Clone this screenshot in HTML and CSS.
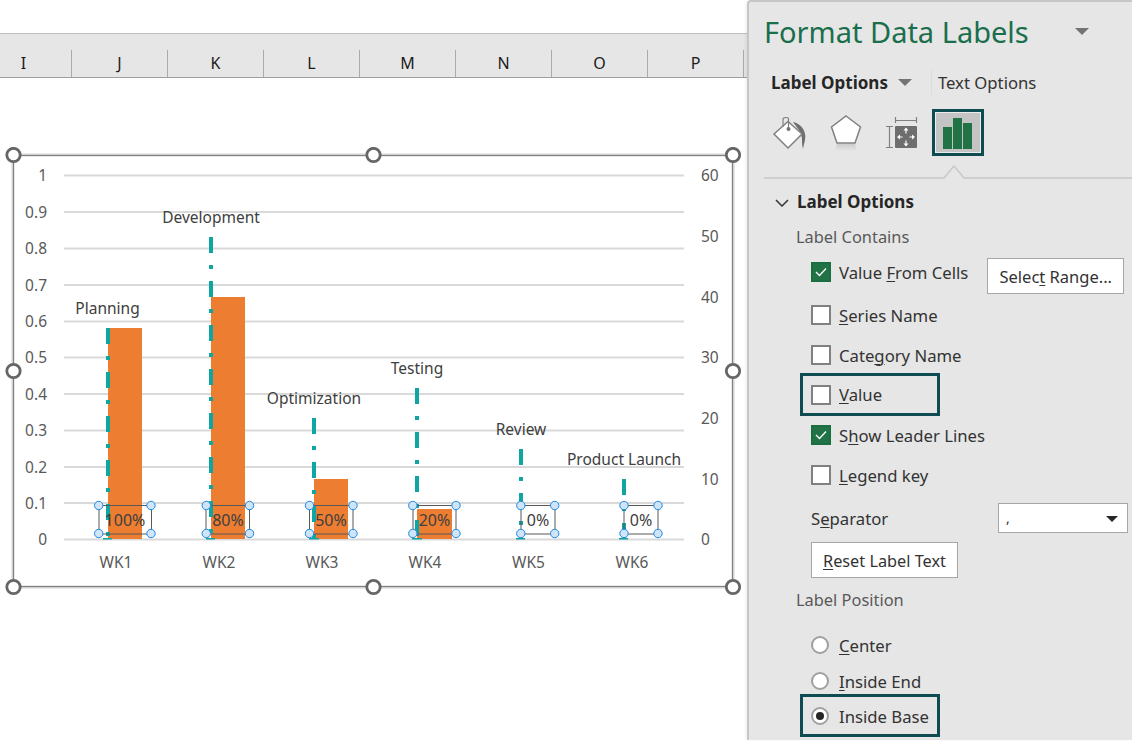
FILE: index.html
```html
<!DOCTYPE html>
<html lang="en">
<head>
<meta charset="utf-8">
<title>Format Data Labels</title>
<link rel="stylesheet" href="styles.css">
</head>
<body>
<div class="page">
  <main class="sheet">
    <div class="columns">
      <div class="col first">I</div><div class="col">J</div><div class="col">K</div><div class="col">L</div><div class="col">M</div><div class="col">N</div><div class="col">O</div><div class="col">P</div>
    </div>
    <svg class="chart" viewBox="0 147 748 450" width="748" height="450">
      <rect class="frame" x="13" y="155" width="720" height="432"/>
      <rect class="frame-in" x="13.500" y="155.500" width="719" height="431"/>
      <g class="grid">
        <line x1="64" x2="684" y1="175.5" y2="175.5"/><line x1="64" x2="684" y1="212" y2="212"/><line x1="64" x2="684" y1="248.5" y2="248.5"/><line x1="64" x2="684" y1="285" y2="285"/><line x1="64" x2="684" y1="321.5" y2="321.5"/><line x1="64" x2="684" y1="357.5" y2="357.5"/><line x1="64" x2="684" y1="394" y2="394"/><line x1="64" x2="684" y1="430.5" y2="430.5"/><line x1="64" x2="684" y1="467" y2="467"/><line x1="64" x2="684" y1="503" y2="503"/><line x1="64" x2="684" y1="539.5" y2="539.5"/>
      </g>
      <g class="axis end">
        <text x="47" y="180.5">1</text><text x="47" y="218">0.9</text><text x="47" y="254">0.8</text><text x="47" y="291">0.7</text><text x="47" y="327">0.6</text><text x="47" y="363">0.5</text><text x="47" y="400">0.4</text><text x="47" y="436">0.3</text><text x="47" y="473">0.2</text><text x="47" y="509">0.1</text><text x="47" y="544.5">0</text>
      </g>
      <g class="axis">
        <text x="701" y="180.5">60</text><text x="701" y="242">50</text><text x="701" y="303">40</text><text x="701" y="363">30</text><text x="701" y="424">20</text><text x="701" y="485">10</text><text x="701" y="544.5">0</text>
      </g>
      <g class="bars">
        <rect x="108" y="328" width="34" height="211"/><rect x="211" y="297" width="34" height="242"/><rect x="314" y="479" width="34" height="60"/><rect x="417" y="509" width="35" height="30"/>
      </g>
      <g class="leader">
        <line x1="108" x2="108" y1="328" y2="539"/><line x1="211" x2="211" y1="237" y2="539"/><line x1="314" x2="314" y1="418" y2="539"/><line x1="417" x2="417" y1="388" y2="539"/><line x1="521" x2="521" y1="449" y2="539"/><line x1="624" x2="624" y1="479" y2="539"/>
      </g>
      <g class="ticks">
        <rect x="103" y="538" width="9" height="1.5"/><rect x="206" y="538" width="9" height="1.5"/><rect x="309" y="538" width="10" height="1.5"/><rect x="412" y="538" width="10" height="1.5"/><rect x="516" y="538" width="9" height="1.5"/><rect x="619" y="538" width="9" height="1.5"/>
      </g>
      <g class="names">
        <text x="107.5" y="314">Planning</text><text x="211" y="222.5">Development</text><text x="314" y="403.5">Optimization</text><text x="417" y="374">Testing</text><text x="521" y="434.5">Review</text><text x="624" y="464.500">Product Launch</text>
      </g>
      <g class="cats">
        <text x="116" y="567.5">WK1</text><text x="219" y="567.5">WK2</text><text x="322" y="567.5">WK3</text><text x="425" y="567.5">WK4</text><text x="528.5" y="567.5">WK5</text><text x="632" y="567.5">WK6</text>
      </g>
      <g class="lblbox">
        <rect x="99" y="505.5" width="52.5" height="28.5"/><rect x="206" y="505.5" width="43.5" height="28.5"/><rect x="309.5" y="505.5" width="43.5" height="28.5"/><rect x="413" y="505.5" width="43" height="28.5"/><rect x="521" y="505.5" width="34" height="28.5"/><rect x="624" y="505.5" width="34" height="28.5"/>
      </g>
      <g class="pct">
        <text x="125" y="526">100%</text><text x="228" y="526">80%</text><text x="331" y="526">50%</text><text x="434.5" y="526">20%</text><text x="538" y="526">0%</text><text x="641" y="526">0%</text>
      </g>
      <g class="dot">
        <circle cx="98.7" cy="505.5" r="4.2"/><circle cx="151" cy="505.5" r="4.2"/><circle cx="98.7" cy="533.5" r="4.2"/><circle cx="151" cy="533.5" r="4.2"/>
        <circle cx="206.3" cy="505.5" r="4.2"/><circle cx="249.5" cy="505.5" r="4.2"/><circle cx="206.3" cy="533.5" r="4.2"/><circle cx="249.5" cy="533.5" r="4.2"/>
        <circle cx="309.5" cy="505.5" r="4.2"/><circle cx="353" cy="505.5" r="4.2"/><circle cx="309.5" cy="533.5" r="4.2"/><circle cx="353" cy="533.5" r="4.2"/>
        <circle cx="412.8" cy="505.5" r="4.2"/><circle cx="456" cy="505.5" r="4.2"/><circle cx="412.8" cy="533.5" r="4.2"/><circle cx="456" cy="533.5" r="4.2"/>
        <circle cx="520.8" cy="505.5" r="4.2"/><circle cx="554.7" cy="505.5" r="4.2"/><circle cx="520.8" cy="533.5" r="4.2"/><circle cx="554.7" cy="533.5" r="4.2"/>
        <circle cx="624" cy="505.5" r="4.2"/><circle cx="658" cy="505.5" r="4.2"/><circle cx="624" cy="533.5" r="4.2"/><circle cx="658" cy="533.5" r="4.2"/>
      </g>
      <g class="handle">
        <circle cx="13.5" cy="155" r="6.7"/><circle cx="373.5" cy="155" r="6.7"/><circle cx="733" cy="155" r="6.7"/><circle cx="13.5" cy="371" r="6.7"/><circle cx="733" cy="371" r="6.7"/><circle cx="13.5" cy="587" r="6.7"/><circle cx="373.5" cy="587" r="6.7"/><circle cx="733" cy="587" r="6.7"/>
      </g>
    </svg>
  </main>
  <aside class="panel">
    <div class="title-row"><h1 class="title">Format Data Labels</h1><span class="tri tri-title"></span></div>
    <div class="tabs"><b class="tab-on">Label Options</b><span class="tri tri-tab"></span><span class="tab-sep"></span><span class="tab-off">Text Options</span></div>
    <div class="icons">
      <svg class="ico ico-a" viewBox="772 109 48 46" width="48" height="46">
        <path class="paint" d="M793 122c6 1 11 6 12 12 1 4-1 10-2 15-1-4-1-7-1-10l-1-6z"/>
        <path class="ico-line" d="M788 121.500l14 12.500-14 14-14-14z"/>
        <path class="ico-thin" d="M783 127v-7a2.500 2.500 0 0 1 2.500-2.500h1A2 2 0 0 1 788.500 120v9"/>
        <circle class="ico-dot" cx="788.500" cy="129" r="2"/>
      </svg>
      <svg class="ico ico-b" viewBox="820 109 56 46" width="56" height="46">
        <defs><linearGradient id="fade" x1="0" y1="0" x2="0" y2="1"><stop offset="0" stop-color="#cccccc"/><stop offset="1" stop-color="#e6e6e6"/></linearGradient></defs>
        <path class="ico-line" d="M846 116l14.500 11-5.500 16h-18l-5.500-16z"/>
        <path fill="url(#fade)" d="M837 144h18l2 7h-22z"/>
      </svg>
      <svg class="ico ico-c" viewBox="876 109 56 46" width="56" height="46">
        <path class="ico-thin" d="M895.500 117v6M916.500 117v6M895.500 120.500h21M886 126.500h7M886 147.500h7M889.500 126.500v21"/>
        <rect class="ico-sq" x="895" y="126" width="22" height="22" rx="1"/>
        <path class="ico-arrows" d="M906 129.500v4M906 140.500v4M898.500 137h4M909.500 137h4"/>
        <path class="ico-heads" d="M906 127.500l2.500 3h-5zM906 146.500l-2.500-3h5zM897 137l3-2.500v5zM915 137l-3-2.500v5z"/>
      </svg>
      <div class="ico-on">
        <svg viewBox="0 0 29 31" width="29" height="31"><path class="ico-bars" d="M0 9h9v22H0zM10 0h9v31H10zM20 5h9v26h-9z"/></svg>
      </div>
    </div>
    <svg class="divider" viewBox="0 0 381 16" width="381" height="16"><path d="M13 14h180l10-12 10 12h168"/></svg>
    <div class="section"><svg class="caret" viewBox="0 0 14 8" width="14" height="8"><path d="M1 1l6 6 6-6"/></svg><b>Label Options</b></div>
    <div class="group">Label Contains</div>
    <div class="row row-first"><span class="cb on"><svg viewBox="0 0 12 10" width="12" height="10"><path d="M1 5l3.500 3.500L11 1.500"/></svg></span><span class="lab">Value <u>F</u>rom Cells</span><button class="btn btn-range">Selec<u>t</u> Range...</button></div>
    <div class="row"><span class="cb"></span><span class="lab"><u>S</u>eries Name</span></div>
    <div class="row"><span class="cb"></span><span class="lab">Cate<u>g</u>ory Name</span></div>
    <div class="row hl"><span class="cb"></span><span class="lab"><u>V</u>alue</span></div>
    <div class="row"><span class="cb on"><svg viewBox="0 0 12 10" width="12" height="10"><path d="M1 5l3.500 3.500L11 1.500"/></svg></span><span class="lab">S<u>h</u>ow Leader Lines</span></div>
    <div class="row"><span class="cb"></span><span class="lab"><u>L</u>egend key</span></div>
    <div class="row row-sep"><span class="sep-lab">S<u>e</u>parator</span><span class="select"><span class="comma">,</span><span class="tri tri-sel"></span></span></div>
    <button class="btn btn-reset"><u>R</u>eset Label Text</button>
    <div class="group group-pos">Label Position</div>
    <div class="row row-radio first-radio"><span class="rd"></span><span class="lab"><u>C</u>enter</span></div>
    <div class="row row-radio"><span class="rd"></span><span class="lab"><u>I</u>nside End</span></div>
    <div class="row hl hl-radio"><span class="rd on"></span><span class="lab lab-base">Inside Base</span></div>
  </aside>
</div>
</body>
</html>
```
FILE: styles.css
```css
* { box-sizing: border-box; }
html, body { margin: 0; padding: 0; background: #fff; }
body { font-family: "Noto Sans", "Open Sans", "Liberation Sans", sans-serif; color: #262626; }
.page { display: flex; width: 1132px; height: 741px; overflow: hidden; }
.sheet { width: 747px; flex: none; padding-top: 33px; overflow: hidden; background: #fff; }

.columns { display: flex; height: 45px; padding-top: 16px; background: #e6e6e6; border-top: 1px solid #c0c0c0; border-bottom: 1px solid #9f9f9f; overflow: hidden; }
.col { flex: none; width: 96px; height: 27px; border-right: 1px solid #ababab; text-align: center; font-size: 16px; line-height: 27px; color: #1a1a1a; }
.col.first { margin-left: -24px; }

.chart { display: block; margin-top: 69px; }
.frame { fill: #fff; stroke: #d2d2d2; stroke-width: 3; }
.frame-in { fill: none; stroke: #808080; stroke-width: 1; }
.grid line { stroke: #d9d9d9; stroke-width: 2; }
.chart text { font-family: "Noto Sans", "Open Sans", sans-serif; font-size: 15.500px; }
.axis text { fill: #595959; }
.axis.end text { text-anchor: end; }
.bars rect { fill: #ed7d31; }
.leader line { stroke: #0ea5a3; stroke-width: 4; stroke-dasharray: 16 12 4 12; }
.ticks rect { fill: #0ea5a3; }
.names text { fill: #404040; text-anchor: middle; }
.cats text { fill: #595959; text-anchor: middle; }
.chart .pct text { fill: #404040; text-anchor: middle; font-size: 16px; }
.lblbox rect { fill: none; stroke: #595959; stroke-width: 1; }
.dot circle { fill: #cfe4f6; stroke: #1e88e5; stroke-width: 1; }
.handle circle { fill: #fff; stroke: #666; stroke-width: 2.800; }

.panel { width: 385px; height: 740px; flex: none; padding-left: 2px; background: #e6e6e6; border-left: 2px solid #c6c6c6; border-top: 2px solid #c6c6c6; border-top-left-radius: 4px; box-shadow: -2px 0 3px rgba(0, 0, 0, .05); overflow: hidden; }
.title-row { display: flex; align-items: center; height: 62px; padding: 0 0 2px 13px; }
.title { margin: 0; font-size: 29px; font-weight: 400; color: #1a6e4c; line-height: 60px; }
.tri { display: block; width: 0; height: 0; border-left: 7px solid transparent; border-right: 7px solid transparent; border-top: 7px solid #737373; }
.tri-title { margin-left: 46px; margin-top: -1px; }
.tabs { display: flex; align-items: center; height: 38px; padding: 0 0 2px 20px; font-size: 16.700px; }
.tab-on { font-size: 17px; font-weight: 700; }
.tri-tab { margin-left: 10px; }
.tab-sep { width: 1px; height: 26px; margin: 0 6px 0 19px; background: #dcdcdc; }
.tab-off { color: #333; }
.icons { display: flex; height: 47px; margin-top: 7px; padding-left: 21px; }
.ico { display: block; flex: none; }
.paint { fill: #6e6e6e; }
.ico-line { fill: #fff; stroke: #808080; stroke-width: 1.500; }
.ico-thin { fill: none; stroke: #808080; stroke-width: 1.200; }
.ico-dot { fill: #737373; }
.ico-sq { fill: #6e6e6e; }
.ico-arrows { fill: none; stroke: #fff; stroke-width: 1.200; }
.ico-heads { fill: #fff; }
.ico-on { display: flex; align-items: flex-end; width: 52px; height: 47px; padding: 0 0 4.500px 7.500px; background: #c4c4c4; border: 3.500px solid #0f4c52; box-shadow: inset 0 0 0 1px #ececec; }
.ico-on svg { display: block; }
.ico-bars { fill: #217346; }
.divider { display: block; margin-top: 8px; }
.divider path { fill: none; stroke: #c8c8c8; stroke-width: 1.500; }
.section { display: flex; align-items: center; height: 36px; margin-top: 4px; padding: 0 0 2px 24px; font-size: 17px; }
.caret { display: block; margin: 3px 8px 0 0; }
.caret path { fill: none; stroke: #333; stroke-width: 1.500; }
.group { display: flex; align-items: center; height: 34px; padding: 0 0 2px 45px; font-size: 16.400px; color: #595959; }
.group-pos { height: 36px; margin-top: 4px; }
.row { display: flex; align-items: center; height: 40px; margin-left: 60px; font-size: 16.700px; color: #333; }
.row-first { height: 36px; margin-bottom: 5px; }
.row u, .btn u { text-underline-offset: 2px; text-decoration-thickness: 1px; }
.lab { margin-left: 8px; white-space: nowrap; }
.lab-base { padding-top: 2px; }
.cb { display: flex; align-items: center; justify-content: center; flex: none; width: 20px; height: 20px; background: #fff; border: 2px solid #808080; }
.cb.on { background: #217346; border-color: #1b6e40; }
.cb svg { display: block; }
.cb path { fill: none; stroke: #fff; stroke-width: 1.300; }
.btn { display: block; height: 36px; padding: 0; background: #fff; border: 1px solid #a6a6a6; font-family: inherit; font-size: 16.500px; color: #333; }
.btn-range { width: 137px; margin: 8px 0 0 19px; }
.btn-reset { width: 147px; margin: 9px 0 0 60px; padding-top: 1px; font-size: 16.300px; }
.hl { width: 140px; height: 43px; margin: -2px 0 -1px 49px; padding-left: 8px; border: 3px solid #0f4c52; }
.row-sep { justify-content: space-between; height: 30px; margin-top: 8px; margin-right: 4px; }
.select { position: relative; display: block; width: 130px; height: 30px; background: #fff; border: 1px solid #a6a6a6; }
.comma { position: absolute; left: 7px; top: 4px; font-size: 14px; }
.tri-sel { position: absolute; right: 9px; top: 12px; border-left-width: 6px; border-right-width: 6px; border-top: 6px solid #262626; }
.row-radio { height: 36px; }
.first-radio { margin-top: 9px; }
.rd { display: flex; align-items: center; justify-content: center; flex: none; width: 18px; height: 18px; margin-right: 2px; background: #fff; border: 2px solid #a0a0a0; border-radius: 50%; }
.rd.on::after { content: ""; width: 8px; height: 8px; background: #262626; border-radius: 50%; }
.hl-radio { margin-top: -5px; height: 43px; }
```
